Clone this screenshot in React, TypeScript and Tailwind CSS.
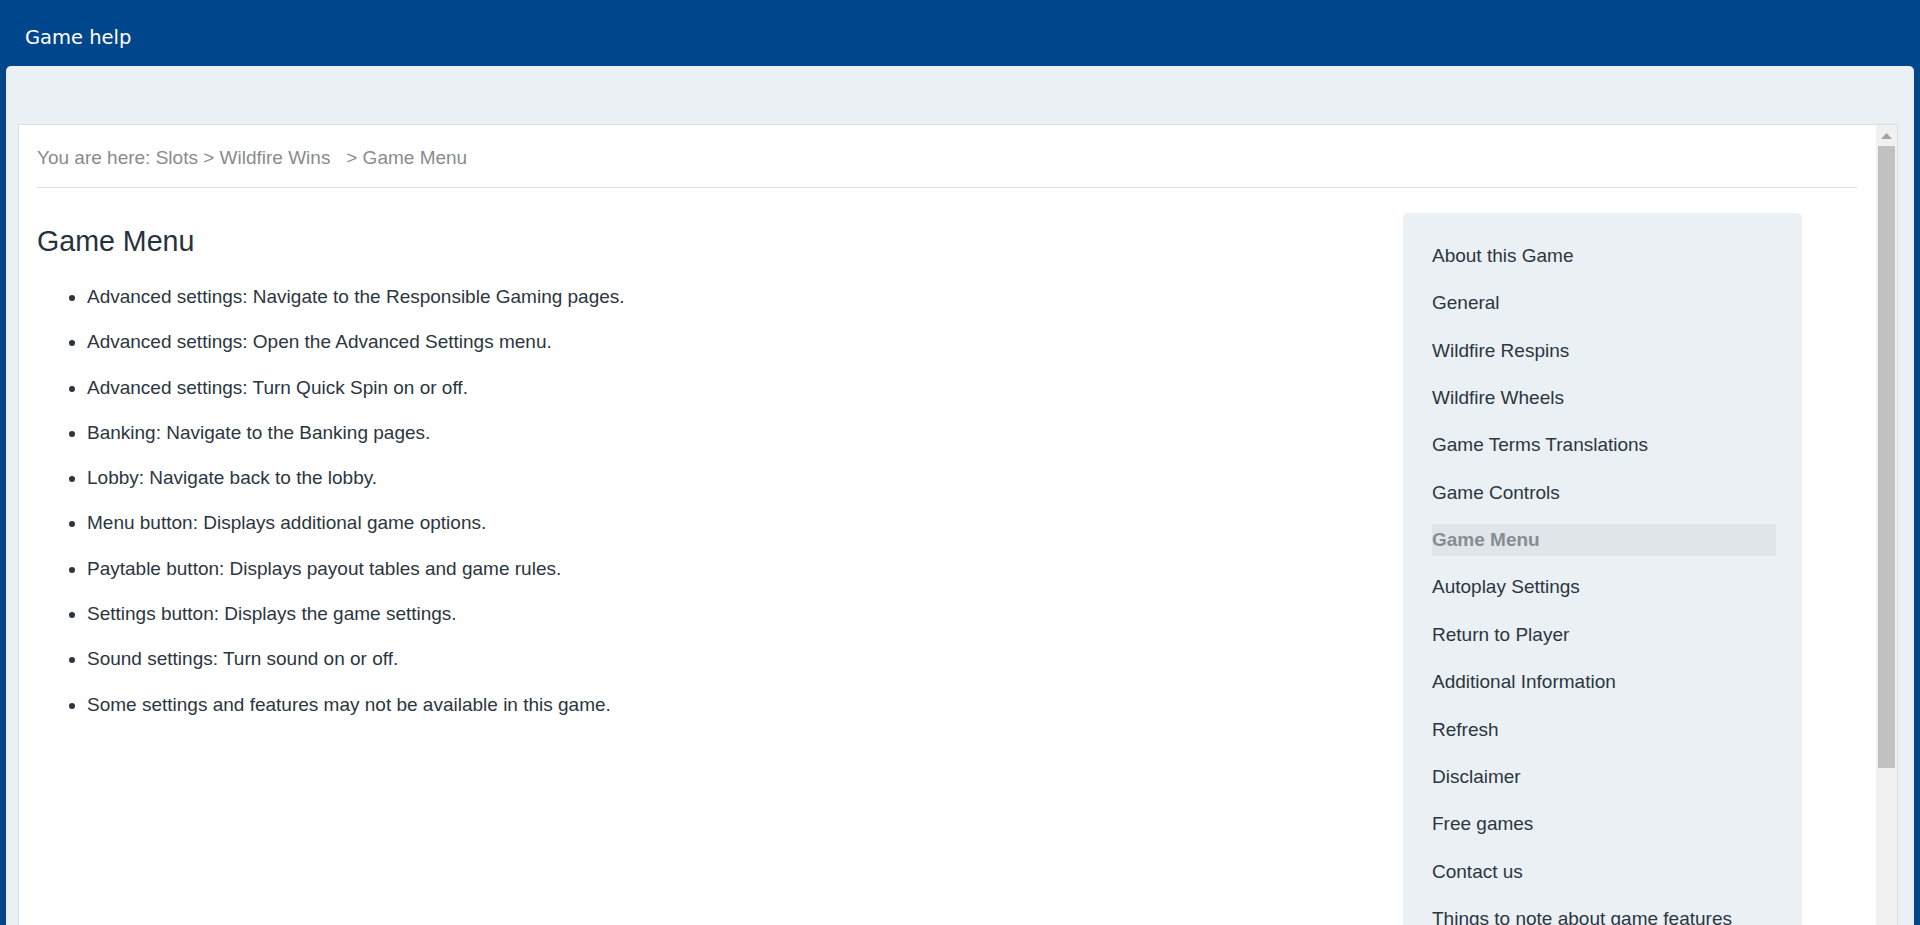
const bullets = [
  "Advanced settings: Navigate to the Responsible Gaming pages.",
  "Advanced settings: Open the Advanced Settings menu.",
  "Advanced settings: Turn Quick Spin on or off.",
  "Banking: Navigate to the Banking pages.",
  "Lobby: Navigate back to the lobby.",
  "Menu button: Displays additional game options.",
  "Paytable button: Displays payout tables and game rules.",
  "Settings button: Displays the game settings.",
  "Sound settings: Turn sound on or off.",
  "Some settings and features may not be available in this game.",
];

const navItems = [
  "About this Game",
  "General",
  "Wildfire Respins",
  "Wildfire Wheels",
  "Game Terms Translations",
  "Game Controls",
  "Game Menu",
  "Autoplay Settings",
  "Return to Player",
  "Additional Information",
  "Refresh",
  "Disclaimer",
  "Free games",
  "Contact us",
  "Things to note about game features",
];

export default function App() {
  const active = "Game Menu";

  return (
    <div
      className="h-screen overflow-hidden bg-[#00468c] flex flex-col"
      style={{ fontFamily: '"Liberation Sans", Arial, sans-serif' }}
    >
      {/* Header */}
      <div className="h-[66px] shrink-0 flex items-center pl-[25px] pt-[9px]">
        <span
          className="text-white text-[19.5px] leading-none"
          style={{ fontFamily: '"DejaVu Sans", sans-serif' }}
        >
          Game help
        </span>
      </div>

      {/* Gray panel */}
      <div className="flex-1 min-h-0 mx-[6px] bg-[#ebf0f4] rounded-t-[5px] pt-[58px] pl-[12px] pr-[16px] flex flex-col">
        {/* White frame */}
        <div className="flex-1 min-h-0 bg-white border border-[#dddddd] border-b-0 flex">
          <div className="flex-1 min-w-0 overflow-hidden pl-[18px] pr-[18px] pt-[19px]">
            {/* Breadcrumb */}
            <div className="text-[19px] leading-[27px] text-[#888b8f] whitespace-pre pb-[16px] border-b border-[#e2e2e2]">
              {"You are here: Slots > Wildfire Wins   > Game Menu"}
            </div>

            <div className="flex">
              {/* Main content */}
              <div className="flex-1 min-w-0">
                <h1 className="mt-[36px] text-[28.6px] leading-[34px] text-[#26323d]">Game Menu</h1>
                <ul className="mt-[25px] list-disc pl-[50px] text-[19px] leading-[27px] text-[#2b3641]">
                  {bullets.map((b) => (
                    <li key={b} className="mb-[18.3px]">
                      {b}
                    </li>
                  ))}
                </ul>
              </div>

              {/* Side nav */}
              <div className="w-[399px] shrink-0 mr-[56px] mt-[25px] bg-[#ebf0f4] rounded-[5px] pl-[29px] pr-[26px] pt-[27px] pb-[20px]">
                <div className="flex flex-col gap-[15.4px]">
                  {navItems.map((item) => (
                    <div
                      key={item}
                      className={
                        item === active
                          ? "h-[32px] flex items-center bg-[#e0e5e9] text-[19px] font-bold text-[#878c93] whitespace-nowrap"
                          : "h-[32px] flex items-center text-[19px] text-[#2b3641] whitespace-nowrap"
                      }
                    >
                      {item}
                    </div>
                  ))}
                </div>
              </div>
            </div>
          </div>

          {/* Scrollbar */}
          <div className="w-[21px] shrink-0 bg-[#f1f1f1] flex flex-col items-center">
            <div className="h-[21px] w-full flex items-center justify-center">
              <svg width="11" height="6" viewBox="0 0 11 6">
                <polygon points="5.5,0 11,6 0,6" fill="#a3a3a3" />
              </svg>
            </div>
            <div className="w-[17px] h-[622px] bg-[#c1c1c1]" />
          </div>
        </div>
      </div>
    </div>
  );
}
